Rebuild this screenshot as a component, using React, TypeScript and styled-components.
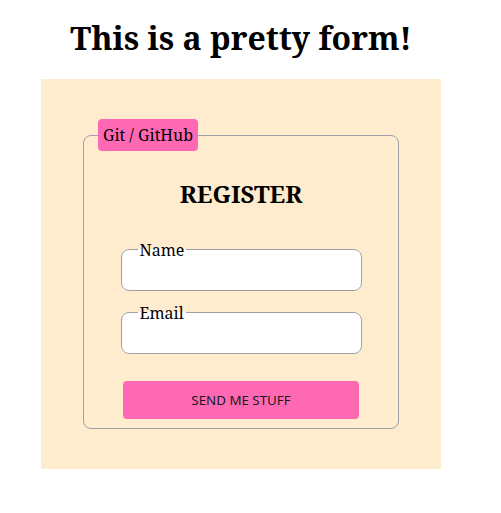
import React from 'react';
import styled, { createGlobalStyle } from 'styled-components';

const GlobalStyle = createGlobalStyle`
    body {
        margin: 8px;
        font-family: "Noto Serif", serif;
        background: #ffffff;
    }
`;

const Page = styled.div`
    width: 400px;
    margin-left: 33px;
`;

const Title = styled.h1`
    font-size: 32px;
    font-weight: bold;
    text-align: center;
    margin: 0 0 20px 0;
    padding-top: 8px;
`;

const Panel = styled.div`
    background-color: #ffebcd;
    padding: 40px;
`;

const Box = styled.fieldset`
    margin: 0 2px;
    border: 1px solid #a0a0a8;
    border-radius: 8px;
    padding: 5.6px 12px 9px;
`;

const Tag = styled.legend`
    background-color: #ff69b4;
    border-radius: 4px;
    padding: 5px 5px;
    font-size: 16px;
    margin-left: 2px;
`;

const Heading = styled.h2`
    font-size: 24px;
    text-align: center;
    margin: 20px 0 29px;
`;

const Column = styled.div`
    width: 245px;
    margin: 0 auto;
    display: flex;
    flex-direction: column;
    align-items: stretch;
`;

const Field = styled.fieldset`
    margin: 0 2px 11px;
    border: 1px solid #a0a0a0;
    border-radius: 8px;
    background: #ffffff;
    padding: 0 16px 7px;
`;

const Label = styled.legend`
    font-size: 16px;
    padding: 0 2px;
`;

const Input = styled.input`
    border: none;
    outline: none;
    height: 17px;
    padding: 0;
    background: transparent;
    width: 100%;
`;

const Button = styled.button`
    align-self: center;
    width: 236px;
    height: 38px;
    margin-top: 16px;
    border: none;
    border-radius: 4px;
    background-color: #ff69b4;
    color: #1a1a1a;
    font-family: "Noto Sans", sans-serif;
    font-size: 13.33px;
    cursor: pointer;
`;

const App: React.FC = () => {
    return (
        <>
            <GlobalStyle />
            <Page>
                <Title>This is a pretty form!</Title>
                <Panel>
                    <Box>
                        <Tag>Git / GitHub</Tag>
                        <Heading>REGISTER</Heading>
                        <Column>
                            <Field>
                                <Label>Name</Label>
                                <Input type="text" />
                            </Field>
                            <Field>
                                <Label>Email</Label>
                                <Input type="email" />
                            </Field>
                            <Button>SEND ME STUFF</Button>
                        </Column>
                    </Box>
                </Panel>
            </Page>
        </>
    );
};

export default App;
